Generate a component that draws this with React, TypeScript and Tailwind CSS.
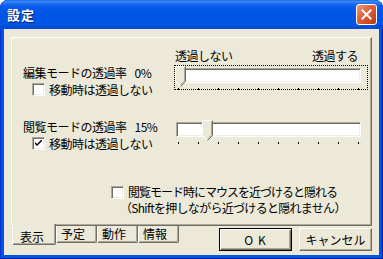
import React from "react";

const jp = "font-['Noto_Sans_CJK_JP','Noto_Sans_CJK_SC',sans-serif]";

const Checkbox = ({ checked }: { checked?: boolean }) => (
  <span className="w-[13px] h-[13px] shrink-0 flex items-center justify-center bg-white border border-t-[#ACA899] border-l-[#ACA899] border-b-white border-r-white shadow-[inset_1px_1px_0_#716F64,inset_-1px_-1px_0_#F1EFE2]">
    {checked && (
      <svg width="7" height="7" viewBox="0 0 7 7">
        <path d="M0 2 V4 L2 6 L7 1 V-1 L2 4 Z" fill="#000" />
      </svg>
    )}
  </span>
);

const Thumb = ({ left }: { left: number }) => (
  <svg
    width="11"
    height="21"
    viewBox="0 0 11 21"
    className="absolute top-0"
    style={{ left }}
  >
    <polygon points="0.5,0.5 10.5,0.5 10.5,15.5 5.5,20.5 0.5,15.5" fill="#ECE9D8" />
    <path d="M0.5 15.5 V0.5 H10.5" stroke="#fff" fill="none" />
    <path d="M0.5 15.5 L5 20" stroke="#fff" fill="none" />
    <path d="M10.5 0.5 V15.5 L5.5 20.5" stroke="#716F64" fill="none" />
    <path d="M9.5 1.5 V15 L5.5 19" stroke="#ACA899" fill="none" />
  </svg>
);

const Slider = ({ value, focused }: { value: number; focused?: boolean }) => {
  const ticks = [0, 1, 2, 3, 4, 5, 6, 7, 8, 9];
  return (
    <div
      className={
        focused
          ? "relative w-[194px] h-[25px] border border-dotted border-black"
          : "relative w-[194px] h-[25px] border border-transparent"
      }
    >
      <div className="ml-[1px] mt-[2px] w-[185px] h-[15px] bg-white border border-t-[#ACA899] border-l-[#ACA899] border-b-white border-r-white shadow-[inset_1px_1px_0_#716F64,inset_-1px_-1px_0_#F1EFE2]" />
      <Thumb left={Math.round(value * 1.8)} />
      {ticks.map((t) => (
        <span
          key={t}
          className="absolute top-[22px] w-[1px] h-[2px] bg-black"
          style={{ left: 3 + t * 20 }}
        />
      ))}
    </div>
  );
};

export default function App() {
  return (
    <div className={`w-[383px] h-[259px] flex flex-col rounded-t-[8px] overflow-hidden bg-[#0054E3] shadow-[inset_1px_0_0_#0831D9,inset_-1px_0_0_#001EA0,inset_0_-1px_0_#001EA0] text-[12px] text-black ${jp}`}>
      {/* title bar */}
      <div className="h-[29px] shrink-0 flex items-center justify-between pl-[7px] pr-[6px] bg-[linear-gradient(to_bottom,#0A5FD8_0%,#3D8FF7_4%,#2A7AF4_9%,#0B5EEC_20%,#0055E5_45%,#0054E2_85%,#0049D2_95%,#0054E3_100%)]">
        <span className="text-white font-bold text-[13px] leading-[15px] tracking-[1px] [text-shadow:1px_1px_0_#0A1E6E]">
          設定
        </span>
        <div className="w-[21px] h-[21px] rounded-[3px] border border-white flex items-center justify-center bg-[linear-gradient(135deg,#EE9A7D_0%,#E0643F_40%,#D04E26_70%,#B83A14_100%)]">
          <svg width="11" height="11" viewBox="0 0 11 11">
            <path d="M1.5 1.5 L9.5 9.5 M9.5 1.5 L1.5 9.5" stroke="#fff" strokeWidth="2" strokeLinecap="square" />
          </svg>
        </div>
      </div>

      {/* client */}
      <div className="flex-1 mx-[4px] mb-[4px] bg-[#ECE9D8] flex flex-col pt-[8px]">
        <div className="mx-[7px] h-[189px] flex flex-col border border-t-white border-l-white border-r-[#716F64] border-b-[#716F64] shadow-[inset_-1px_-1px_0_#ACA899] tracking-[-0.5px]">
          <div className="mt-[11px] ml-[163px] w-[183px] h-[13px] leading-[13px] flex justify-between">
            <span>透過しない</span>
            <span>透過する</span>
          </div>

          <div className="mt-[3px] flex">
            <div className="w-[162px] pl-[11px]">
              <div className="mt-[1px] leading-[13px] flex gap-[8px]">
                <span>編集モードの透過率</span>
                <span>0%</span>
              </div>
              <div className="mt-[4px] pl-[9px] flex items-center gap-[4px] leading-[13px]">
                <Checkbox />
                <span>移動時は透過しない</span>
              </div>
            </div>
            <Slider value={0} focused />
          </div>

          <div className="mt-[23px] flex">
            <div className="w-[162px] pl-[11px]">
              <div className="mt-[1px] leading-[13px] flex gap-[8px]">
                <span>閲覧モードの透過率</span>
                <span>15%</span>
              </div>
              <div className="mt-[4px] pl-[9px] flex items-center gap-[4px] leading-[13px]">
                <Checkbox checked />
                <span>移動時は透過しない</span>
              </div>
            </div>
            <Slider value={15} />
          </div>

          <div className="mt-[34px] ml-[99px] flex items-start">
            <div className="mt-[2px]">
              <Checkbox />
            </div>
            <div className="ml-[4px] leading-[16px]">
              <div className="tracking-[-1px]">閲覧モード時にマウスを近づけると隠れる</div>
              <div className="-ml-[8px] tracking-[-0.7px]">（Shiftを押しながら近づけると隠れません）</div>
            </div>
          </div>
        </div>

        {/* tabs + buttons */}
        <div className="flex justify-between items-start pl-[8px] pr-[7px]">
          <div className="flex items-start">
            <div className="relative z-10 -mt-[2px] w-[44px] h-[21px] pl-[7px] pt-[6px] leading-[13px] bg-[#ECE9D8] border-l border-l-white border-r border-r-[#716F64] border-b border-b-[#716F64] rounded-b-[2px] shadow-[inset_-1px_-1px_0_#ACA899]">
              表示
            </div>
            {["予定", "動作", "情報"].map((t) => (
              <div
                key={t}
                className="w-[41px] h-[17px] pl-[4px] pt-[1px] leading-[13px] border-l border-l-white border-r border-r-[#716F64] border-b border-b-[#716F64] rounded-b-[2px] shadow-[inset_-1px_-1px_0_#ACA899]"
              >
                {t}
              </div>
            ))}
          </div>
          <div className="flex gap-[7px] mt-[2px]">
            <button className="w-[73px] h-[23px] bg-[#ECE9D8] border border-black shadow-[inset_1px_1px_0_#fff,inset_-1px_-1px_0_#716F64,inset_-2px_-2px_0_#ACA899] leading-[13px] tracking-[1px]">
              O K
            </button>
            <button className="w-[73px] h-[23px] bg-[#ECE9D8] border border-t-white border-l-white border-r-[#716F64] border-b-[#716F64] shadow-[inset_-1px_-1px_0_#ACA899] leading-[13px]">
              キャンセル
            </button>
          </div>
        </div>
      </div>
    </div>
  );
}
